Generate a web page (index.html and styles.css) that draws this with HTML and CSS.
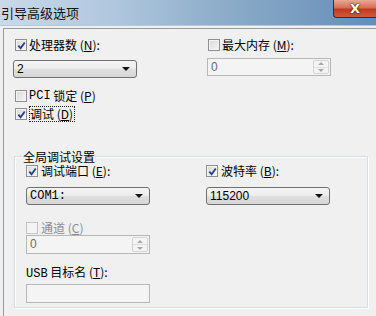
FILE: index.html
```html
<!DOCTYPE html>
<html lang="zh-CN">
<head>
  <meta charset="UTF-8">
  <title>引导高级选项</title>
  <link rel="stylesheet" href="styles.css">
</head>
<body>
  <div class="window">
    <div class="titlebar">
      <span class="title">引导高级选项</span>
      <span class="close">X</span>
    </div>
    <div class="panel">
      <!-- top row: processors / max memory -->
      <div class="cols top-cols">
        <div class="col">
          <label class="check"><span class="box"><svg viewBox="0 0 10 10"><path d="M1.5 5.2 L4 8 L8.6 1.6"/></svg></span>处理器数 (<u>N</u>):</label>
          <div class="combo combo-first"><span class="val">2</span><span class="arrow"></span></div>
        </div>
        <div class="col">
          <label class="check"><span class="box"></span>最大内存 (<u>M</u>):</label>
          <div class="spin spin-top"><span class="val">0</span><span class="spin-btns"><span class="up"></span><span class="down"></span></span></div>
        </div>
      </div>
      <label class="check row-pci"><span class="box"></span><span class="mono">PCI</span>&nbsp;锁定 (<u>P</u>)</label>
      <label class="check row-debug"><span class="box"><svg viewBox="0 0 10 10"><path d="M1.5 5.2 L4 8 L8.6 1.6"/></svg></span><span class="focus">调试 (<u>D</u>)</span></label>

      <div class="group">
        <span class="group-title">全局调试设置</span>
        <div class="cols group-cols">
          <div class="col">
            <label class="check"><span class="box"><svg viewBox="0 0 10 10"><path d="M1.5 5.2 L4 8 L8.6 1.6"/></svg></span>调试端口 (<u>E</u>):</label>
            <div class="combo combo-group"><span class="val mono">COM1:</span><span class="arrow"></span></div>
          </div>
          <div class="col">
            <label class="check"><span class="box"><svg viewBox="0 0 10 10"><path d="M1.5 5.2 L4 8 L8.6 1.6"/></svg></span>波特率 (<u>B</u>):</label>
            <div class="combo combo-group"><span class="val">115200</span><span class="arrow"></span></div>
          </div>
        </div>
        <label class="check disabled row-channel"><span class="box"></span>通道 (<u>C</u>)</label>
        <div class="spin spin-group"><span class="val">0</span><span class="spin-btns"><span class="up"></span><span class="down"></span></span></div>
        <div class="text-label"><span class="mono">USB</span>&nbsp;目标名 (<u>T</u>):</div>
        <div class="textbox"></div>
      </div>
    </div>
  </div>
</body>
</html>
```

FILE: styles.css
```css
/* base */
* {
  margin: 0;
  padding: 0;
  box-sizing: border-box;
}
body {
  width: 376px;
  height: 316px;
  overflow: hidden;
  background: #f0f0f0;
  font-family: "Noto Sans CJK SC", "Liberation Sans", sans-serif;
  font-size: 12px;
  color: #000;
}
u {
  text-decoration: underline;
}
.mono {
  font-family: "Liberation Mono", "Noto Sans CJK SC", monospace;
}
.window {
  height: 316px;
  display: flex;
  flex-direction: column;
}

/* title bar */
.titlebar {
  height: 26px;
  display: flex;
  align-items: flex-start;
  background: linear-gradient(to right, #c9d9e9, #b0c7de 30%, #8cacc9 60%, #648db7);
  border-bottom: 1px solid #b8c8d8;
}
.title {
  padding: 4px 0 0 1px;
  font-size: 13px;
  line-height: 17px;
  color: #111;
}
.close {
  margin-left: auto;
  width: 43px;
  height: 18px;
  border: 1px solid #5a1f17;
  border-top: none;
  border-right: none;
  border-bottom-left-radius: 4px;
  background: linear-gradient(#e9a897, #d76f57 45%, #c2391f 55%, #cf5a3e);
  color: #fff;
  font-family: "DejaVu Sans", sans-serif;
  font-weight: bold;
  font-size: 13px;
  line-height: 17px;
  text-align: center;
  text-shadow: 0 0 2px #4a1008, 0 0 1px #4a1008;
}

/* main panel */
.panel {
  flex: 1;
  margin: 2px 0 0 3px;
  border-top: 1px solid #9a9a9a;
  border-left: 1px solid #9a9a9a;
  padding: 9px 0 0 9px;
}
.cols {
  display: grid;
}
.top-cols {
  grid-template-columns: 193px 125px;
}
.group-cols {
  grid-template-columns: 180px 125px;
  margin-top: 1px;
}
.col {
  display: flex;
  flex-direction: column;
}

/* checkboxes */
.check {
  display: flex;
  align-items: center;
  height: 14px;
  line-height: 14px;
  white-space: nowrap;
}
.box {
  width: 12px;
  height: 12px;
  margin: 0 2px 0 2px;
  border: 1px solid #8e8f8f;
  background: linear-gradient(135deg, #d8d8d8, #f6f6f6);
  box-shadow: inset 0 0 0 1px #f4f4f4;
  display: flex;
  align-items: center;
  justify-content: center;
}
.box svg {
  width: 9px;
  height: 9px;
}
.box path {
  fill: none;
  stroke: #23418c;
  stroke-width: 2;
}
.group .box {
  margin-left: 0;
  margin-right: 3px;
}
.check.disabled {
  color: #8d8d8d;
}
.check.disabled .box {
  border-color: #c4c4c4;
  background: #f4f4f4;
  box-shadow: none;
}
.row-pci {
  margin-top: 11px;
}
.row-debug {
  margin-top: 4px;
}
.focus {
  border: 1px dotted #222;
  line-height: 14px;
  padding: 0 1px 0 0;
}

/* combo boxes */
.combo {
  width: 124px;
  height: 18px;
  border: 1px solid #707070;
  border-radius: 3px;
  background: linear-gradient(#f4f4f4, #ececec 50%, #e0e0e0 51%, #d6d6d6);
  display: flex;
  align-items: center;
  padding-left: 3px;
  line-height: 16px;
}
.combo .val {
  flex: 1;
  font-family: "Liberation Sans", sans-serif;
}
.combo .val.mono {
  font-family: "Liberation Mono", monospace;
}
.combo-first {
  margin-top: 8px;
}
.combo-group {
  margin-top: 9px;
}
.arrow {
  width: 0;
  height: 0;
  margin-right: 6px;
  border-left: 4px solid transparent;
  border-right: 4px solid transparent;
  border-top: 4px solid #111;
}

/* spinners */
.spin {
  width: 124px;
  height: 18px;
  border: 1px solid #b5b8bb;
  background: #f4f4f4;
  display: flex;
  color: #6d6d6d;
  line-height: 16px;
}
.spin .val {
  flex: 1;
  padding-left: 3px;
  font-family: "Liberation Sans", sans-serif;
}
.spin-top {
  margin-top: 6px;
  margin-left: 1px;
}
.spin-group {
  height: 19px;
}
.spin-btns {
  width: 16px;
  margin: 1px;
  border: 1px solid #d4d4d4;
  border-radius: 2px;
  display: flex;
  flex-direction: column;
}
.spin-btns span {
  flex: 1;
  display: flex;
  align-items: center;
  justify-content: center;
}
.spin-btns .up {
  border-bottom: 1px solid #dedede;
}
.spin-btns .up::after {
  content: "";
  border-left: 3px solid transparent;
  border-right: 3px solid transparent;
  border-bottom: 3px solid #a8a8a8;
}
.spin-btns .down::after {
  content: "";
  border-left: 3px solid transparent;
  border-right: 3px solid transparent;
  border-top: 3px solid #a8a8a8;
}

/* group box */
.group {
  width: 354px;
  margin: 35px 0 0 1px;
  border: 1px solid #d5dfe5;
  box-shadow: inset 1px 1px 0 #fff, 1px 1px 0 #fff;
  padding: 0 0 4px 11px;
  display: flex;
  flex-direction: column;
  align-items: flex-start;
}
.group-title {
  margin: -7px 0 0 -4px;
  padding: 0 1px;
  background: #f0f0f0;
  line-height: 13px;
}
.row-channel {
  margin-top: 16px;
}
.text-label {
  margin-top: 11px;
  height: 14px;
  line-height: 14px;
}
.textbox {
  margin-top: 5px;
  width: 124px;
  height: 19px;
  border: 1px solid #b5b8bb;
  background: #f4f4f4;
}
```
